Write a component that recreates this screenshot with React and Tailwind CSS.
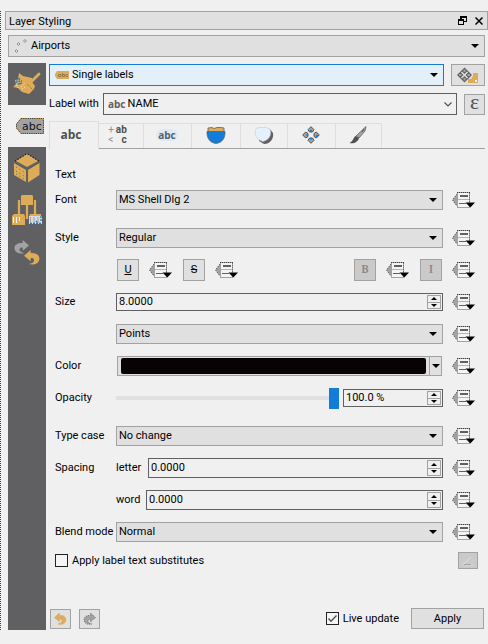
import React, { useState } from 'react';

const undoPath = 'M0 6.500 L7 0 V3.500 C13 3 17 6 16 11 C15 15 11 17 5 15.500 C9 15 11 13 10.500 11 C10 9 9 8.500 7 9 V12.500 Z';

function DownArrow({ className = '' }) {
  return (
    <svg viewBox="0 0 8 4" className={`pointer-events-none h-1 w-2 ${className}`} aria-hidden="true">
      <path d="M0 0H8L4 4Z" fill="#000" />
    </svg>
  );
}

function Combo({ label, value, id, children, className = 'h-5 flex-1', tone = 'border-[#a2a2a2] bg-[#e0e0e0]', pad = 'pl-0.5' }) {
  return (
    <div className={`relative flex min-w-0 items-center border ${tone} ${className}`}>
      {children}
      <select id={id} aria-label={label} className={`h-full w-full min-w-0 appearance-none bg-transparent pr-5 outline-none ${pad}`}>
        <option>{value}</option>
      </select>
      <DownArrow className="absolute right-[5px]" />
    </div>
  );
}

function Override({ name = 'Data defined override' }) {
  return (
    <button type="button" aria-label={name} className="h-4 w-6 shrink-0">
      <svg viewBox="0 0 24 16" className="h-4 w-6">
        <path d="M5 2L0.500 8L5 14Z" fill="#a2a2a2" />
        <path d="M5 2L0.500 8L5 14" fill="none" stroke="#606062" strokeDasharray="1.500 1" />
        <rect x="5.500" y="0.500" width="12" height="15" fill="#f4f4f4" stroke="#a2a2a2" />
        <path d="M5 0.500H18" stroke="#404040" strokeDasharray="1 1" />
        <path d="M17.500 1V10" stroke="#707070" strokeDasharray="1 1" />
        <path d="M8 4H16" stroke="#606062" strokeWidth="2" />
        <path d="M6 7.500H17" stroke="#b4b4b4" />
        <path d="M7 11.500H14" stroke="#606062" />
        <path d="M13.500 10.500H23L18.300 15.500Z" fill="#000" />
      </svg>
    </button>
  );
}

function Spin({ id, initial, label, className = 'h-5 flex-1' }) {
  const [value, setValue] = useState(initial);
  return (
    <div className={`flex min-w-0 items-stretch border border-[#606062] ${className}`}>
      <input id={id} aria-label={label} value={value} onChange={(e) => setValue(e.target.value)} className="w-full min-w-0 bg-transparent pl-0.5 outline-none" />
      <div className="my-px mr-px flex w-3.5 shrink-0 flex-col divide-y divide-[#a2a2a2] border border-[#a2a2a2]">
        <button type="button" aria-label={`Increase ${label}`} className="flex flex-1 items-center justify-center">
          <svg viewBox="0 0 6 3" className="h-[3px] w-1.5"><path d="M0 3H6L3 0Z" /></svg>
        </button>
        <button type="button" aria-label={`Decrease ${label}`} className="flex flex-1 items-center justify-center">
          <svg viewBox="0 0 6 3" className="h-[3px] w-1.5"><path d="M0 0H6L3 3Z" /></svg>
        </button>
      </div>
    </div>
  );
}

function Row({ label, htmlFor, children, className = '' }) {
  return (
    <div className={`flex h-8 items-center ${className}`}>
      <label htmlFor={htmlFor} className="w-[61px] shrink-0 whitespace-nowrap">{label}</label>
      <div className="flex min-w-0 flex-1 items-center">{children}</div>
      <div className="ml-[9px] flex"><Override name={`${label || 'Units'} override`} /></div>
    </div>
  );
}

function StyleButton({ children, label, disabled }) {
  return (
    <button
      type="button"
      aria-label={label}
      disabled={disabled}
      className="flex size-[22px] shrink-0 items-center justify-center border border-[#a2a2a2] bg-[#e0e0e0] disabled:bg-[#cacaca] disabled:font-serif disabled:text-[#8a8a8a]"
    >
      {children}
    </button>
  );
}

function Check({ children, defaultChecked }) {
  const [on, setOn] = useState(!!defaultChecked);
  return (
    <label className="flex items-center gap-1">
      <span className="relative flex size-[13px]">
        <input type="checkbox" checked={on} onChange={() => setOn(!on)} className="size-[13px] appearance-none border border-[#222] bg-[#f4f4f4]" />
        {on && (
          <svg viewBox="0 0 13 13" className="pointer-events-none absolute inset-0" fill="none" stroke="#505050" strokeWidth="1.4">
            <path d="M2.500 6.500L5 9.200L10.500 3.500" />
          </svg>
        )}
      </span>
      {children}
    </label>
  );
}

function Brush() {
  return (
    <svg viewBox="0 0 28 24" className="h-6 w-7" aria-hidden="true">
      <path d="M18 10L26 2" stroke="#deac58" strokeWidth="2.800" strokeLinecap="round" />
      <path d="M6 1L10 4L19 6L19 10L22 14L21 17L16 22L9 20L5 16L0 15L3 12L2 8L5 7Z" fill="#deac58" />
      <path d="M14 12L20 18" stroke="#606062" strokeWidth="0.800" strokeDasharray="1 1" />
      <path d="M3 8L8 7M3 10L9 9M5 12L9 11M6 6L7 13" stroke="#127dd8" strokeWidth="1.300" strokeDasharray="1.500 1" />
      <path d="M8 15L12 11M9 17L12 15M3 13L6 17" stroke="#f4f4f4" strokeWidth="0.900" strokeDasharray="1 1.500" />
    </svg>
  );
}

function LabelTag() {
  return (
    <svg viewBox="0 0 28 16" className="h-4 w-7" role="img" aria-label="Labels">
      <path d="M5 0.500H27.500V15.500H5L0.500 10V6Z" fill="#a2a2a2" stroke="#deac58" />
      <path d="M5 0.500H27.500V15.500H5L0.500 10V6Z" fill="none" stroke="#404040" strokeDasharray="1.300 0.900" />
      <text x="6" y="12" fontSize="11" fontFamily="DejaVu Sans, sans-serif" fill="#111">abc</text>
    </svg>
  );
}

function Cube() {
  return (
    <svg viewBox="0 0 26 30" className="h-[30px] w-[26px]" aria-hidden="true">
      <path d="M13 1L24 8L13 14L2 8Z" fill="#deac58" />
      <path d="M1 8L13 0.500L25 8" fill="none" stroke="#111" strokeWidth="1.200" strokeDasharray="1 2" />
      <path d="M0 10L12 17V29L0 22Z" fill="#deac58" />
      <path d="M14 17L25.500 10V22L14 29.500Z" fill="#deac58" />
      <path d="M2 14L10 19M2 18L10 23M2 21L10 26" stroke="#606062" strokeDasharray="1 3" />
    </svg>
  );
}

function Brushes() {
  return (
    <svg viewBox="0 0 30 30" className="size-[30px]" aria-hidden="true">
      <path d="M9 1L10 0H20L21 1V10H9Z" fill="#deac58" />
      <path d="M15 10V24M7 5V19M23 5V19" stroke="#deac58" strokeWidth="2.200" />
      <path d="M2 19H12L13 21V30H0V21Z" fill="#deac58" />
      <path d="M1.500 22V28M4.500 22V28M7.500 22V26" stroke="#f4f4f4" />
      <path d="M18 19H29V22H17Z" fill="#deac58" />
      <path d="M17 21H30V29H17Z" fill="#d8dde2" />
      <path d="M18.500 22V29M22 22V28M26 22V28" stroke="#a2a2a2" />
      <path d="M18 28.500H29M24 26L26 28M29 21V27" stroke="#127dd8" strokeWidth="1.300" strokeDasharray="2 1" />
    </svg>
  );
}

function History() {
  return (
    <svg viewBox="0 0 26 25" className="h-[25px] w-[26px]" aria-hidden="true">
      <path transform="translate(15 0) scale(-0.900 0.850)" d={undoPath} fill="#a2a2a2" />
      <path transform="translate(10 10) scale(0.950 0.900)" d={undoPath} fill="#deac58" />
    </svg>
  );
}

function Diamonds({ className, accent }) {
  return (
    <svg viewBox="0 0 18 18" className={className} aria-hidden="true">
      <g fill="#a2a2a2" stroke="#505052" strokeWidth="1">
        <path d="M9 0.700L12 3.700L10.500 6H7.500L6 3.700Z" />
        <path d="M9 17.300L12 14.300L10.500 12H7.500L6 14.300Z" />
        <path d="M0.700 9L3.700 6L6 7.500V10.500L3.700 12Z" />
        <path d="M17.300 9L14.300 6L12 7.500V10.500L14.300 12Z" />
      </g>
      <path d="M8 4H10V6H8ZM8 12H10V13.500H8ZM4.500 8H6V10H4.500ZM14 9H16V11H14Z" fill={accent} />
    </svg>
  );
}

function Placement() {
  return (
    <svg viewBox="0 0 22 17" className="h-[17px] w-[22px]" aria-hidden="true">
      <path d="M7.500 0.500L15 8L7.500 15.500L0 8Z" fill="#606062" />
      <path d="M4.500 5L10.500 11M10.500 5L4.500 11" stroke="#e0e0e0" strokeWidth="1.500" />
      <path d="M7.500 2.500V5M7.500 11V13.500M2 8H4.500M10.500 8H13" stroke="#a2a2a2" strokeWidth="2" />
      <path d="M11 16V12H14L16 9V6H21V16Z" fill="#deac58" />
      <path d="M18 13H20V15H18Z" fill="#f4f4f4" />
    </svg>
  );
}

function Shield() {
  return (
    <svg viewBox="0 0 20 17" className="h-[17px] w-5" aria-hidden="true">
      <path d="M2 1L6 0.500L8 1.500L11 0.500L15 0.500L18 1V5H2Z" fill="#deac58" stroke="#606062" strokeWidth="0.800" />
      <path d="M1 4.500H19C19.500 11 16 16 10 16.500C4 16 0.500 11 1 4.500Z" fill="#127dd8" stroke="#606062" strokeWidth="0.700" />
    </svg>
  );
}

function Shadow() {
  return (
    <svg viewBox="0 0 20 17" className="h-[17px] w-5" aria-hidden="true">
      <path d="M4 1L16 2L19 6C20 12 16 17 10 17L5 14Z" fill="#606062" />
      <path d="M2 1.500L5 0.500H8L12 0.500L16 2C18 8 15 13 9 14.500C3 13 -0.500 8 2 1.500Z" fill="#e5f1fa" stroke="#c4ccd2" strokeWidth="0.600" />
    </svg>
  );
}

function PaintBrush() {
  return (
    <svg viewBox="0 0 18 18" className="size-[18px]" aria-hidden="true">
      <path d="M17 0.500L16 5L10 12L7 10Z" fill="#a2a2a2" stroke="#606062" strokeWidth="0.800" />
      <path d="M6.500 10L10 12C9 16 5 18 0.500 17C4 15.500 4 12 6.500 10Z" fill="#505052" />
      <path d="M13 6L15 3" stroke="#505052" />
    </svg>
  );
}

function Undo({ redo }) {
  return (
    <svg viewBox="0 0 17 17" className="h-3 w-[13px]" aria-hidden="true">
      <path
        transform={redo ? 'translate(17 0) scale(-1 1)' : undefined}
        d={undoPath}
        fill={redo ? '#a2a2a2' : '#deac58'}
        stroke={redo ? '#505052' : '#deac58'}
        strokeDasharray={redo ? '1.500 1.500' : undefined}
      />
    </svg>
  );
}

const tabs = [
  {
    name: 'Formatting',
    width: 'w-[45px]',
    icon: (
      <span className="mr-1.5 flex flex-col text-[10px] leading-[10px] font-bold text-[#505052]">
        <span className="flex justify-between gap-0.5"><span className="font-normal text-[#909090]">+</span><span>ab</span></span>
        <span className="flex justify-between"><span className="font-normal text-[#909090]">&lt;</span><span>c</span></span>
      </span>
    ),
  },
  { name: 'Buffer', width: 'w-12', icon: <span className="rounded-full bg-[#dceaf5] px-0.5 font-['Open_Sans',sans-serif] text-[10px] leading-3 font-bold text-[#56616c]">abc</span> },
  { name: 'Background', width: 'w-[49px]', icon: <Shield /> },
  { name: 'Shadow', width: 'w-[47px]', icon: <Shadow /> },
  { name: 'Placement', width: 'w-12', icon: <Diamonds className="size-[18px]" accent="#127dd8" /> },
  { name: 'Rendering', width: 'w-[46px]', icon: <PaintBrush /> },
];

export default function App() {
  const [opacity, setOpacity] = useState(100);
  return (
    <main className="flex min-h-screen flex-col bg-[#f0f0f0] pt-[11px] pb-3.5 font-[Roboto,'DejaVu_Sans_Condensed',sans-serif] text-[11px] leading-4 text-black">
      <section className="flex flex-1 flex-col border-l border-dotted border-[#404040] pl-1">
        <header className="flex h-[19px] items-center border border-[#a2a2a2] bg-[#e0e0e0] pr-1 pl-[3px]">
          <h1 className="flex-1 pt-0.5">Layer Styling</h1>
          <button type="button" aria-label="Float panel" className="mr-2">
            <svg viewBox="0 0 9 9" className="size-[9px]" fill="none" stroke="#000" shapeRendering="crispEdges">
              <path d="M3 2.500V1H8.500V5.500H6M2.500 1H9" strokeWidth="1.300" />
              <path d="M0.500 3.500H5.500V8.500H0.500ZM0 4H6" />
            </svg>
          </button>
          <button type="button" aria-label="Close panel">
            <svg viewBox="0 0 8 8" className="size-2" stroke="#000" strokeWidth="1.500"><path d="M0.500 0.500L7.500 7.500M7.500 0.500L0.500 7.500" /></svg>
          </button>
        </header>

        <div className="mt-[5px] flex flex-1 flex-col pr-[3px] pl-[3px]">
          <Combo label="Layer" value="Airports" className="h-[22px]">
            <svg viewBox="0 0 14 14" className="ml-1.5 size-3.5 shrink-0" fill="none" stroke="#909090" aria-hidden="true">
              <path d="M10 0.500L11.500 2L10 3.500L8.500 2ZM3.500 3.500L5 5L3.500 6.500L2 5ZM1.500 10.500L3 12L1.500 13.500L0 12Z" />
            </svg>
          </Combo>

          <div className="mt-1.5 flex flex-1">
            <nav aria-label="Styling pages" className="flex w-[38px] shrink-0 flex-col bg-[#606062]">
              <button type="button" aria-label="Symbology" className="flex h-[42px] items-center justify-center"><Brush /></button>
              <button type="button" className="flex h-[42px] items-center justify-end bg-[#f0f0f0] pr-0.5"><LabelTag /></button>
              <button type="button" aria-label="3D view" className="flex h-[42px] items-center justify-center"><Cube /></button>
              <button type="button" aria-label="Style manager" className="flex h-[42px] items-center justify-center"><Brushes /></button>
              <button type="button" aria-label="History" className="flex h-[42px] items-center justify-center"><History /></button>
            </nav>

            <form className="flex min-w-0 flex-1 flex-col pt-px pb-px pl-[3px]" onSubmit={(e) => e.preventDefault()}>
              <div className="flex gap-[7px]">
                <Combo label="Label mode" value="Single labels" className="h-[22px] flex-1" tone="border-[#127dd8] bg-[#e3f0fa]" pad="pl-[3px]">
                  <svg viewBox="0 0 14 8" className="ml-[5px] h-2 w-3.5 shrink-0" aria-hidden="true">
                    <path d="M2 0H14V8H2L0 5V3Z" fill="#deac58" />
                    <path d="M3.500 3.500H6V5.500H3.500ZM7.500 2V5.500H9.500V3.500H7.500M13 3.500H11V5.500H13" fill="none" stroke="#8a744a" strokeWidth="0.800" />
                  </svg>
                </Combo>
                <button type="button" aria-label="Automated placement settings" className="flex h-[22px] w-[34px] items-center justify-center border border-[#a2a2a2] bg-[#e0e0e0]">
                  <Placement />
                </button>
              </div>

              <div className="mt-[7px] flex items-center">
                <label htmlFor="with" className="w-[54px] shrink-0 whitespace-nowrap">Label with</label>
                <div className="flex h-[22px] min-w-0 flex-1 items-center border border-[#606062] pr-1 pl-1">
                  <span className="font-['Open_Sans',sans-serif] text-[10px] font-bold text-[#606062]">abc</span>
                  <input id="with" defaultValue="NAME" className="w-full min-w-0 bg-transparent pl-0.5 outline-none" />
                  <svg viewBox="0 0 8 5" className="h-[5px] w-2 shrink-0" fill="none" stroke="#505052" strokeWidth="1.200"><path d="M0.500 0.500L4 4L7.500 0.500" /></svg>
                </div>
                <button type="button" aria-label="Expression" className="ml-[7px] flex size-[21px] items-center justify-center border border-[#a2a2a2] bg-[#e0e0e0] pb-1 font-['Liberation_Serif',serif] text-[22px] leading-4 text-[#505052]">ε</button>
              </div>

              <div role="tablist" className="mt-1.5 flex h-7 items-end">
                <button type="button" role="tab" aria-selected="true" className="flex h-7 w-[50px] shrink-0 items-center justify-center border-x border-t border-[#dedede] pr-1.5 pb-0.5 font-['Open_Sans',sans-serif] text-[12px] font-bold text-[#505052]">abc</button>
                <div className="flex h-[26px] min-w-0 flex-1 border-b border-[#a2a2a2]">
                  {tabs.map((t) => (
                    <button key={t.name} type="button" role="tab" aria-label={t.name} className={`flex items-center justify-center border-t border-r border-[#dedede] pr-px pb-0.5 ${t.width}`}>
                      {t.icon}
                    </button>
                  ))}
                </div>
              </div>

              <div className="flex flex-col pt-[18px] pr-[9px] pl-1.5">
                <h2>Text</h2>
                <Row label="Font" htmlFor="font" className="mt-px"><Combo id="font" value="MS Shell Dlg 2" /></Row>
                <Row label="Style" htmlFor="style" className="mt-1.5"><Combo id="style" value="Regular" /></Row>
                <Row label="">
                  <div className="flex flex-1 items-center gap-2.5 pl-px">
                    <StyleButton label="Underline"><span className="underline">U</span></StyleButton>
                    <Override />
                    <StyleButton label="Strikeout"><span className="line-through">S</span></StyleButton>
                    <Override />
                  </div>
                  <div className="flex items-center gap-2.5 pr-px">
                    <StyleButton label="Bold" disabled><b>B</b></StyleButton>
                    <Override />
                    <StyleButton label="Italic" disabled><b>I</b></StyleButton>
                  </div>
                </Row>
                <Row label="Size" htmlFor="size"><Spin id="size" label="Size" initial="8.0000" className="h-[18px] flex-1" /></Row>
                <Row label=""><Combo label="Size units" value="Points" /></Row>
                <Row label="Color" htmlFor="color">
                  <button id="color" type="button" aria-label="Text color" className="mx-px flex h-5 flex-1 border border-[#a2a2a2] bg-[#e0e0e0]">
                    <span className="my-px mr-[3px] ml-[3px] h-4 flex-1 rounded-xs bg-[#080205]" />
                    <span className="flex h-full w-3 items-center justify-center border-l border-[#a2a2a2]"><DownArrow /></span>
                  </button>
                </Row>
                <Row label="Opacity" htmlFor="opacity">
                  <input
                    id="opacity"
                    type="range"
                    value={opacity}
                    onChange={(e) => setOpacity(Number(e.target.value))}
                    className="h-[21px] min-w-0 flex-1 appearance-none bg-transparent [&::-webkit-slider-runnable-track]:h-1 [&::-webkit-slider-runnable-track]:bg-[#e0e0e0] [&::-webkit-slider-thumb]:-mt-2 [&::-webkit-slider-thumb]:h-[21px] [&::-webkit-slider-thumb]:w-2.5 [&::-webkit-slider-thumb]:appearance-none [&::-webkit-slider-thumb]:bg-[#127dd8]"
                  />
                  <Spin label="Opacity value" initial="100.0 %" className="ml-1 h-[18px] w-[100px]" />
                </Row>
                <Row label="Type case" htmlFor="case" className="mt-1.5"><Combo id="case" value="No change" /></Row>
                <Row label="Spacing">
                  <label htmlFor="letter" className="w-8 shrink-0">letter</label>
                  <Spin id="letter" label="Letter spacing" initial="0.0000" />
                </Row>
                <Row label="">
                  <label htmlFor="word" className="w-[30px] shrink-0">word</label>
                  <Spin id="word" label="Word spacing" initial="0.0000" />
                </Row>
                <Row label="Blend mode" htmlFor="blend"><Combo id="blend" value="Normal" /></Row>
                <div className="mt-1 flex items-center justify-between pr-px">
                  <Check>Apply label text substitutes</Check>
                  <button type="button" disabled aria-label="Edit substitutes" className="mr-[-3px] flex h-[17px] w-5 items-center justify-center border border-[#a2a2a2] bg-[#cacaca]">
                    <svg viewBox="0 0 12 10" className="h-2.5 w-3" fill="none" stroke="#e0e0e0"><path d="M1 9L9 1M3 9H11" /><path d="M2 8.500H9" stroke="#a2a2a2" /></svg>
                  </button>
                </div>
              </div>

              <footer className="mt-auto flex items-center pr-px pl-px">
                <button type="button" aria-label="Undo" className="flex h-5 w-[21px] items-center justify-center border border-[#a2a2a2] bg-[#e0e0e0]"><Undo /></button>
                <button type="button" aria-label="Redo" className="ml-2 flex h-5 w-[21px] items-center justify-center border border-[#a2a2a2] bg-[#e0e0e0]"><Undo redo /></button>
                <div className="ml-auto"><Check defaultChecked>Live update</Check></div>
                <button type="submit" className="ml-3 h-[21px] w-[73px] border border-[#a2a2a2] bg-[#e0e0e0]">Apply</button>
              </footer>
            </form>
          </div>
        </div>
      </section>
    </main>
  );
}
